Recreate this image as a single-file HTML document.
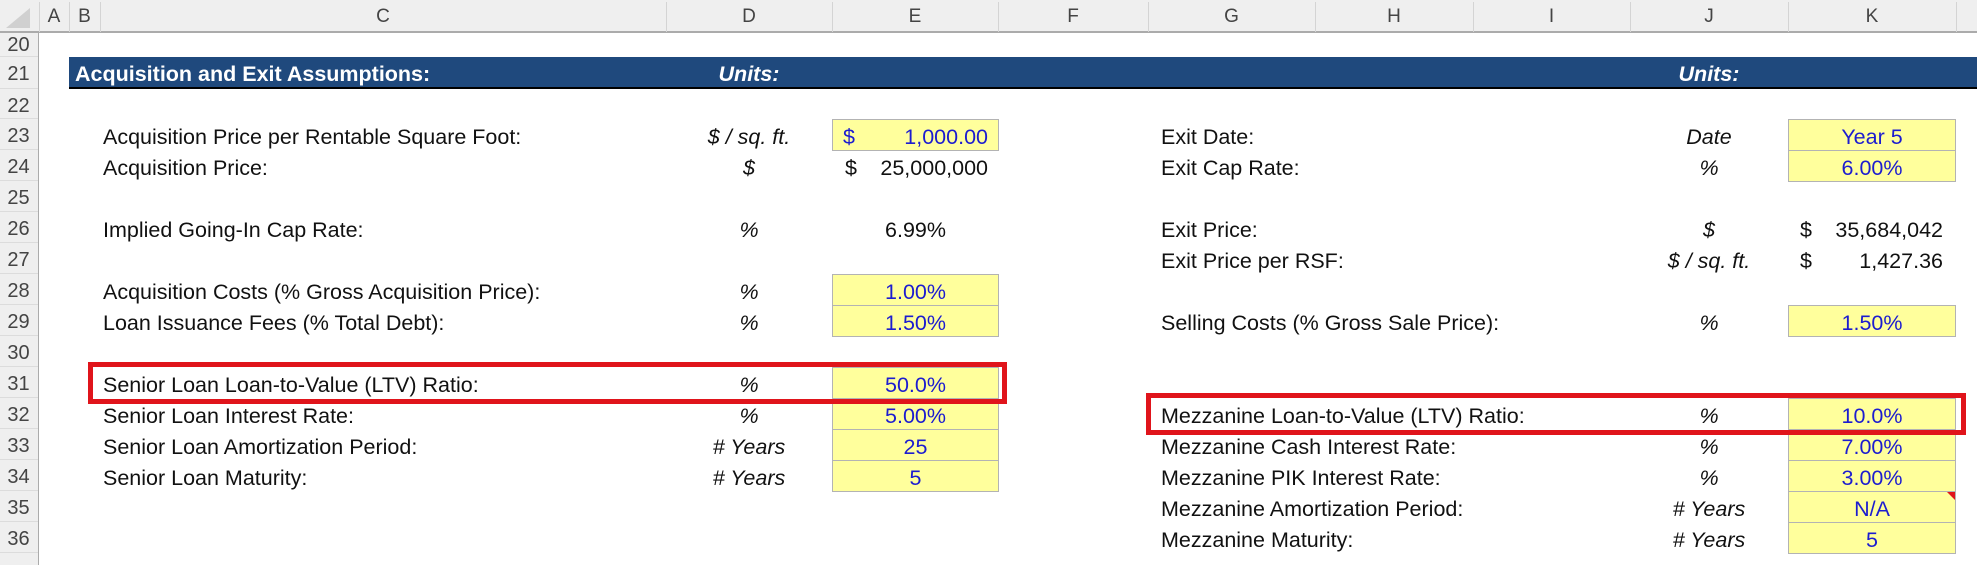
<!DOCTYPE html>
<html><head><meta charset="utf-8"><style>
*{margin:0;padding:0;box-sizing:border-box}
body{width:1977px;height:565px;overflow:hidden;background:#fff;font-family:"Liberation Sans",sans-serif;font-size:21.5px;color:#111;position:relative}
.a{position:absolute;white-space:nowrap;line-height:36px;height:31px}
.hd{position:absolute;top:0;left:0;width:1977px;height:33px;background:#efefef;border-bottom:2px solid #ababab}
.cl{position:absolute;top:0;height:32px;line-height:33px;color:#444;font-size:19px;text-align:center}
.sep{position:absolute;top:2px;height:30px;width:1px;background:#d4d4d4}
.rn{position:absolute;left:0;width:39px;background:#efefef;border-right:1px solid #ababab;top:33px;height:532px}
.rl{position:absolute;left:0;width:37px;text-align:center;color:#444;font-size:20px}
.rlg{position:absolute;left:0;width:38px;height:1px;background:#dcdcdc}
.y{position:absolute;background:#ffff9c;border:1px solid #b3b3b3;color:#1c1cd0;text-align:center;line-height:35px}
.c{text-align:center;font-style:italic}
.b{color:#1c1cd0}
.red{position:absolute;border:5px solid #e0141b}
</style></head><body>
<div class="hd"></div>
<div style="position:absolute;left:6px;top:8px;width:0;height:0;border-left:24px solid transparent;border-bottom:20px solid #d0d0d0"></div>
<div class="cl" style="left:39px;width:30px">A</div>
<div class="cl" style="left:69px;width:31px">B</div>
<div class="cl" style="left:100px;width:566px">C</div>
<div class="cl" style="left:666px;width:166px">D</div>
<div class="cl" style="left:832px;width:166px">E</div>
<div class="cl" style="left:998px;width:150px">F</div>
<div class="cl" style="left:1148px;width:167px">G</div>
<div class="cl" style="left:1315px;width:158px">H</div>
<div class="cl" style="left:1473px;width:157px">I</div>
<div class="cl" style="left:1630px;width:158px">J</div>
<div class="cl" style="left:1788px;width:168px">K</div>
<div class="sep" style="left:39px"></div><div class="sep" style="left:69px"></div><div class="sep" style="left:100px"></div><div class="sep" style="left:666px"></div><div class="sep" style="left:832px"></div><div class="sep" style="left:998px"></div><div class="sep" style="left:1148px"></div><div class="sep" style="left:1315px"></div><div class="sep" style="left:1473px"></div><div class="sep" style="left:1630px"></div><div class="sep" style="left:1788px"></div><div class="sep" style="left:1956px"></div>
<div class="rn"></div>
<div class="rl" style="top:33px;height:24px;line-height:24px">20</div><div class="rlg" style="top:56px"></div>
<div class="rl" style="top:57px;height:32px;line-height:34px">21</div><div class="rlg" style="top:88px"></div>
<div class="rl" style="top:89px;height:30px;line-height:34px">22</div><div class="rlg" style="top:118px"></div>
<div class="rl" style="top:119px;height:31px;line-height:34px">23</div><div class="rlg" style="top:149px"></div>
<div class="rl" style="top:150px;height:31px;line-height:34px">24</div><div class="rlg" style="top:180px"></div>
<div class="rl" style="top:181px;height:31px;line-height:34px">25</div><div class="rlg" style="top:211px"></div>
<div class="rl" style="top:212px;height:31px;line-height:34px">26</div><div class="rlg" style="top:242px"></div>
<div class="rl" style="top:243px;height:31px;line-height:34px">27</div><div class="rlg" style="top:273px"></div>
<div class="rl" style="top:274px;height:31px;line-height:34px">28</div><div class="rlg" style="top:304px"></div>
<div class="rl" style="top:305px;height:31px;line-height:34px">29</div><div class="rlg" style="top:335px"></div>
<div class="rl" style="top:336px;height:31px;line-height:34px">30</div><div class="rlg" style="top:366px"></div>
<div class="rl" style="top:367px;height:31px;line-height:34px">31</div><div class="rlg" style="top:397px"></div>
<div class="rl" style="top:398px;height:31px;line-height:34px">32</div><div class="rlg" style="top:428px"></div>
<div class="rl" style="top:429px;height:31px;line-height:34px">33</div><div class="rlg" style="top:459px"></div>
<div class="rl" style="top:460px;height:31px;line-height:34px">34</div><div class="rlg" style="top:490px"></div>
<div class="rl" style="top:491px;height:31px;line-height:34px">35</div><div class="rlg" style="top:521px"></div>
<div class="rl" style="top:522px;height:31px;line-height:34px">36</div><div class="rlg" style="top:552px"></div>

<div style="position:absolute;left:69px;top:57px;width:1908px;height:32px;background:#1f497d;border-bottom:2px solid #000"></div>
<div class="a" style="left:75px;top:57px;color:#fff;font-weight:bold;line-height:34px">Acquisition and Exit Assumptions:</div>
<div class="a" style="left:666px;width:166px;top:57px;color:#fff;font-weight:bold;font-style:italic;text-align:center;line-height:34px">Units:</div>
<div class="a" style="left:1630px;width:158px;top:57px;color:#fff;font-weight:bold;font-style:italic;text-align:center;line-height:34px">Units:</div>

<div class="a" style="left:103px;top:119px">Acquisition Price per Rentable Square Foot:</div>
<div class="a" style="left:103px;top:150px">Acquisition Price:</div>
<div class="a" style="left:103px;top:212px">Implied Going-In Cap Rate:</div>
<div class="a" style="left:103px;top:274px">Acquisition Costs (% Gross Acquisition Price):</div>
<div class="a" style="left:103px;top:305px">Loan Issuance Fees (% Total Debt):</div>
<div class="a" style="left:103px;top:367px">Senior Loan Loan-to-Value (LTV) Ratio:</div>
<div class="a" style="left:103px;top:398px">Senior Loan Interest Rate:</div>
<div class="a" style="left:103px;top:429px">Senior Loan Amortization Period:</div>
<div class="a" style="left:103px;top:460px">Senior Loan Maturity:</div>

<div class="a c" style="left:666px;width:166px;top:119px">$ / sq. ft.</div>
<div class="a c" style="left:666px;width:166px;top:150px">$</div>
<div class="a c" style="left:666px;width:166px;top:212px">%</div>
<div class="a c" style="left:666px;width:166px;top:274px">%</div>
<div class="a c" style="left:666px;width:166px;top:305px">%</div>
<div class="a c" style="left:666px;width:166px;top:367px">%</div>
<div class="a c" style="left:666px;width:166px;top:398px">%</div>
<div class="a c" style="left:666px;width:166px;top:429px"># Years</div>
<div class="a c" style="left:666px;width:166px;top:460px"># Years</div>

<div class="y" style="left:832px;top:119px;width:167px;height:32px"></div>
<div class="a b" style="left:843px;top:119px">$</div>
<div class="a b" style="left:850px;width:138px;text-align:right;top:119px">1,000.00</div>
<div class="a" style="left:845px;top:150px">$</div>
<div class="a" style="left:850px;width:138px;text-align:right;top:150px">25,000,000</div>
<div class="a" style="left:832px;width:167px;text-align:center;top:212px">6.99%</div>
<div class="y" style="left:832px;top:274px;width:167px;height:32px">1.00%</div>
<div class="y" style="left:832px;top:305px;width:167px;height:32px">1.50%</div>
<div class="y" style="left:832px;top:367px;width:167px;height:32px">50.0%</div>
<div class="y" style="left:832px;top:398px;width:167px;height:32px">5.00%</div>
<div class="y" style="left:832px;top:429px;width:167px;height:32px">25</div>
<div class="y" style="left:832px;top:460px;width:167px;height:32px">5</div>

<div class="a" style="left:1161px;top:119px">Exit Date:</div>
<div class="a" style="left:1161px;top:150px">Exit Cap Rate:</div>
<div class="a" style="left:1161px;top:212px">Exit Price:</div>
<div class="a" style="left:1161px;top:243px">Exit Price per RSF:</div>
<div class="a" style="left:1161px;top:305px">Selling Costs (% Gross Sale Price):</div>
<div class="a" style="left:1161px;top:398px">Mezzanine Loan-to-Value (LTV) Ratio:</div>
<div class="a" style="left:1161px;top:429px">Mezzanine Cash Interest Rate:</div>
<div class="a" style="left:1161px;top:460px">Mezzanine PIK Interest Rate:</div>
<div class="a" style="left:1161px;top:491px">Mezzanine Amortization Period:</div>
<div class="a" style="left:1161px;top:522px">Mezzanine Maturity:</div>

<div class="a c" style="left:1630px;width:158px;top:119px">Date</div>
<div class="a c" style="left:1630px;width:158px;top:150px">%</div>
<div class="a c" style="left:1630px;width:158px;top:212px">$</div>
<div class="a c" style="left:1630px;width:158px;top:243px">$ / sq. ft.</div>
<div class="a c" style="left:1630px;width:158px;top:305px">%</div>
<div class="a c" style="left:1630px;width:158px;top:398px">%</div>
<div class="a c" style="left:1630px;width:158px;top:429px">%</div>
<div class="a c" style="left:1630px;width:158px;top:460px">%</div>
<div class="a c" style="left:1630px;width:158px;top:491px"># Years</div>
<div class="a c" style="left:1630px;width:158px;top:522px"># Years</div>

<div class="y" style="left:1788px;top:119px;width:168px;height:32px">Year 5</div>
<div class="y" style="left:1788px;top:150px;width:168px;height:32px">6.00%</div>
<div class="a" style="left:1800px;top:212px">$</div>
<div class="a" style="left:1805px;width:138px;text-align:right;top:212px">35,684,042</div>
<div class="a" style="left:1800px;top:243px">$</div>
<div class="a" style="left:1805px;width:138px;text-align:right;top:243px">1,427.36</div>
<div class="y" style="left:1788px;top:305px;width:168px;height:32px">1.50%</div>
<div class="y" style="left:1788px;top:398px;width:168px;height:32px">10.0%</div>
<div class="y" style="left:1788px;top:429px;width:168px;height:32px">7.00%</div>
<div class="y" style="left:1788px;top:460px;width:168px;height:32px">3.00%</div>
<div class="y" style="left:1788px;top:491px;width:168px;height:32px">N/A</div>
<div class="y" style="left:1788px;top:522px;width:168px;height:32px">5</div>
<div style="position:absolute;left:1947px;top:492px;width:0;height:0;border-left:8px solid transparent;border-top:8px solid #e0141b"></div>

<div class="red" style="left:88px;top:362px;width:919px;height:42px"></div>
<div class="red" style="left:1146px;top:393px;width:820px;height:42px"></div>
</body></html>
